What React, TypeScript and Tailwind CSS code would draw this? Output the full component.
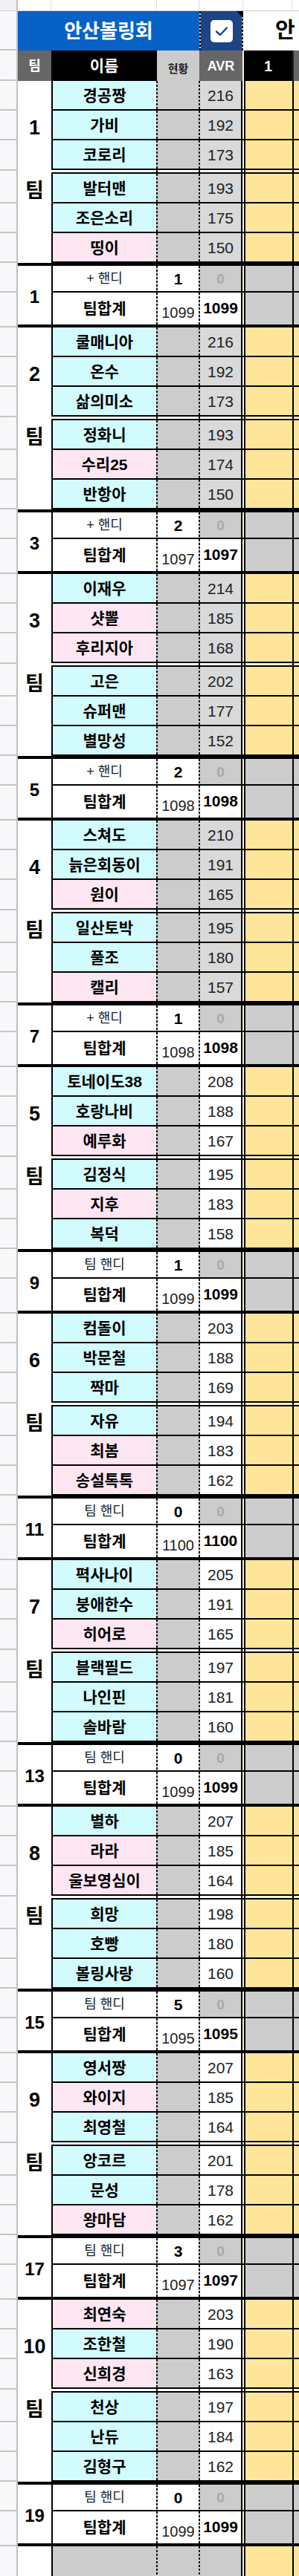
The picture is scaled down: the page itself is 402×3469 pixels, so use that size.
import React from "react";

type P = { n: string; a: number; pink?: boolean };
type Team = { players: P[]; rank: number; handi: string; hv: number; total: number; avrGray: boolean };

const teams: Team[] = [
  { players: [{ n: "경공짱", a: 216 }, { n: "가비", a: 192 }, { n: "코로리", a: 173 }, { n: "발터맨", a: 193 }, { n: "조은소리", a: 175 }, { n: "띵이", a: 150, pink: true }], rank: 1, handi: "+ 핸디", hv: 1, total: 1099, avrGray: true },
  { players: [{ n: "쿨매니아", a: 216 }, { n: "온수", a: 192 }, { n: "삶의미소", a: 173 }, { n: "정화니", a: 193 }, { n: "수리25", a: 174, pink: true }, { n: "반항아", a: 150 }], rank: 3, handi: "+ 핸디", hv: 2, total: 1097, avrGray: true },
  { players: [{ n: "이재우", a: 214 }, { n: "샷뽈", a: 185, pink: true }, { n: "후리지아", a: 168, pink: true }, { n: "고은", a: 202 }, { n: "슈퍼맨", a: 177 }, { n: "별망성", a: 152 }], rank: 5, handi: "+ 핸디", hv: 2, total: 1098, avrGray: true },
  { players: [{ n: "스쳐도", a: 210 }, { n: "늙은회동이", a: 191 }, { n: "원이", a: 165, pink: true }, { n: "일산토박", a: 195 }, { n: "풀조", a: 180 }, { n: "캘리", a: 157, pink: true }], rank: 7, handi: "+ 핸디", hv: 1, total: 1098, avrGray: true },
  { players: [{ n: "토네이도38", a: 208 }, { n: "호랑나비", a: 188 }, { n: "예루화", a: 167, pink: true }, { n: "김정식", a: 195 }, { n: "지후", a: 183, pink: true }, { n: "복덕", a: 158 }], rank: 9, handi: "팀 핸디", hv: 1, total: 1099, avrGray: false },
  { players: [{ n: "컴돌이", a: 203 }, { n: "박문철", a: 188 }, { n: "짝마", a: 169 }, { n: "자유", a: 194 }, { n: "최봄", a: 183, pink: true }, { n: "송설톡톡", a: 162, pink: true }], rank: 11, handi: "팀 핸디", hv: 0, total: 1100, avrGray: false },
  { players: [{ n: "펵사나이", a: 205 }, { n: "붕애한수", a: 191 }, { n: "히어로", a: 165, pink: true }, { n: "블랙필드", a: 197 }, { n: "나인핀", a: 181 }, { n: "솔바람", a: 160 }], rank: 13, handi: "팀 핸디", hv: 0, total: 1099, avrGray: false },
  { players: [{ n: "별하", a: 207 }, { n: "라라", a: 185, pink: true }, { n: "울보영심이", a: 164, pink: true }, { n: "희망", a: 198 }, { n: "호빵", a: 180 }, { n: "볼링사랑", a: 160 }], rank: 15, handi: "팀 핸디", hv: 5, total: 1095, avrGray: false },
  { players: [{ n: "영서짱", a: 207 }, { n: "와이지", a: 185, pink: true }, { n: "최영철", a: 164 }, { n: "앙코르", a: 201 }, { n: "문성", a: 178 }, { n: "왕마담", a: 162, pink: true }], rank: 17, handi: "팀 핸디", hv: 3, total: 1097, avrGray: false },
  { players: [{ n: "최연숙", a: 203, pink: true }, { n: "조한철", a: 190 }, { n: "신희경", a: 163, pink: true }, { n: "천상", a: 197 }, { n: "난듀", a: 184 }, { n: "김형구", a: 162 }], rank: 19, handi: "팀 핸디", hv: 0, total: 1099, avrGray: false },
];

const dashGray =
  "w-[2px] self-stretch shrink-0 bg-[repeating-linear-gradient(to_bottom,#111_0px,#111_3px,#cfcfcf_3px,#cfcfcf_5px)]";
const dashWhite =
  "w-[2px] self-stretch shrink-0 bg-[repeating-linear-gradient(to_bottom,#111_0px,#111_3px,#ffffff_3px,#ffffff_5px)]";

function Cols({
  rowCls,
  name,
  nameCls,
  hy,
  hyCls,
  avr,
  avrCls,
  scoreCls,
}: {
  rowCls: string;
  name?: React.ReactNode;
  nameCls: string;
  hy?: React.ReactNode;
  hyCls: string;
  avr?: React.ReactNode;
  avrCls: string;
  scoreCls: string;
}) {
  return (
    <div className={`flex ${rowCls}`}>
      <div className={`w-[141px] shrink-0 border-l-2 border-black flex items-center justify-center ${nameCls}`}>{name}</div>
      <div className={dashGray} />
      <div className={`w-[55px] shrink-0 flex items-center justify-center ${hyCls}`}>{hy}</div>
      <div className={dashGray} />
      <div className={`w-[55px] shrink-0 flex items-center justify-center ${avrCls}`}>{avr}</div>
      <div className="w-[2px] shrink-0 bg-black" />
      <div className="w-[2px] shrink-0 bg-[#fdf1cf]" />
      <div className="w-[2px] shrink-0 bg-black" />
      <div className={`w-[63px] shrink-0 ${scoreCls}`} />
      <div className="w-[2px] shrink-0 bg-black" />
      <div className={`flex-1 ${scoreCls}`} />
    </div>
  );
}

function GapRow() {
  return (
    <div className="flex h-[3px]">
      <div className="w-[141px] shrink-0 bg-white" />
      <div className={dashWhite} />
      <div className="w-[55px] shrink-0 bg-white" />
      <div className={dashWhite} />
      <div className="w-[55px] shrink-0 bg-white" />
      <div className="w-[2px] shrink-0 bg-black" />
      <div className="w-[2px] shrink-0 bg-[#fdf1cf]" />
      <div className="w-[2px] shrink-0 bg-black" />
      <div className="w-[63px] shrink-0 bg-[#fdf1cf]" />
      <div className="w-[2px] shrink-0 bg-black" />
      <div className="flex-1 bg-[#fdf1cf]" />
    </div>
  );
}

function GutterCell({ h }: { h: string }) {
  return <div className={`${h} border-b-2 border-[#c6c6c6]`} />;
}

function Block({ t, idx }: { t: Team; idx: number }) {
  const avrBg = t.avrGray ? "bg-[#d9d9d9]" : "bg-white";
  const playerRow = (p: P, i: number) => (
    <Cols
      key={i}
      rowCls={i === 3 ? "h-[42px] border-t-2 border-b-2 border-black" : "h-[40px] border-b-2 border-black"}
      name={<span className="text-[21px] font-bold text-black leading-none">{p.n}</span>}
      nameCls={p.pink ? "bg-[#fde6f2]" : "bg-[#d2fbfd]"}
      hyCls="bg-[#cccccc]"
      avr={<span className="text-[21px] text-[#222] leading-none">{p.a}</span>}
      avrCls={avrBg}
      scoreCls="bg-[#ffe599]"
    />
  );
  return (
    <div className="flex">
      <div className="w-[24px] shrink-0 bg-[#f8f8fb] border-r-2 border-[#c2c2c2] flex flex-col">
        <GutterCell h="h-[40px]" />
        <GutterCell h="h-[40px]" />
        <GutterCell h="h-[41px]" />
        <GutterCell h="h-[44px]" />
        <GutterCell h="h-[40px]" />
        <GutterCell h="h-[40px]" />
        <GutterCell h="h-[40px]" />
        <GutterCell h="h-[47px]" />
      </div>
      <div className="flex-1 flex flex-col">
        <div className="flex">
          <div className="w-[45px] shrink-0 bg-white flex flex-col items-center pt-[49px]">
            <div className="h-[28px] leading-[28px] text-[27px] font-bold text-black">{idx + 1}</div>
            <div className="mt-[57px] h-[28px] leading-[28px] text-[27px] font-bold text-black">팀</div>
          </div>
          <div className="flex-1 flex flex-col">
            {t.players.slice(0, 3).map((p, i) => playerRow(p, i))}
            <GapRow />
            {t.players.slice(3).map((p, i) => playerRow(p, i + 3))}
          </div>
        </div>
        <div className="h-[4px] bg-black" />
        <div className="flex">
          <div className="w-[45px] shrink-0 bg-white flex items-center justify-center pt-[4px]">
            <span className="text-[24px] font-bold text-black leading-none">{t.rank}</span>
          </div>
          <div className="flex-1 flex flex-col">
            <Cols
              rowCls="h-[36px] border-b-2 border-black"
              name={<span className="text-[18px] text-[#222] leading-none">{t.handi}</span>}
              nameCls="bg-white"
              hy={<span className="text-[21px] font-bold text-black leading-none">{t.hv}</span>}
              hyCls="bg-white"
              avr={<span className="text-[19px] font-bold text-[#a9a9a9] leading-none">0</span>}
              avrCls="bg-[#cccccc]"
              scoreCls="bg-[#cccccc]"
            />
            <Cols
              rowCls="h-[43px]"
              name={<span className="text-[21px] font-bold text-black leading-none">팀합계</span>}
              nameCls="bg-white"
              hy={<span className="text-[20px] text-[#222] leading-none pt-[10px]">{t.total}</span>}
              hyCls="bg-white"
              avr={<span className="text-[21px] font-bold text-black leading-none pb-[2px]">{t.total}</span>}
              avrCls="bg-white"
              scoreCls="bg-[#cccccc]"
            />
          </div>
        </div>
        <div className="h-[4px] bg-black" />
      </div>
    </div>
  );
}

export default function App() {
  return (
    <div className="w-[402px] h-[3469px] overflow-hidden bg-white font-['Liberation_Sans','Noto_Sans_CJK_KR',sans-serif]">
      {/* top blank row */}
      <div className="flex h-[15px] border-b border-[#cfcfcf]">
        <div className="w-[24px] shrink-0 bg-[#f1f1f4] border-r-2 border-[#c2c2c2]" />
        <div className="w-[45px] shrink-0 border-r border-[#dedede]" />
        <div className="w-[142px] shrink-0 border-r border-[#dedede]" />
        <div className="w-[57px] shrink-0 border-r border-[#dedede]" />
        <div className="w-[59px] shrink-0 border-r border-[#dedede]" />
        <div className="w-[66px] shrink-0 border-r border-[#dedede]" />
        <div className="flex-1" />
      </div>
      {/* title row */}
      <div className="flex h-[53px]">
        <div className="w-[24px] shrink-0 bg-[#f8f8fb] border-r-2 border-[#c2c2c2] border-b-2 border-b-[#c6c6c6]" />
        <div className="w-[244px] shrink-0 bg-[#0862c6] flex items-center justify-center">
          <span className="text-[26px] font-bold text-white leading-none">안산볼링회</span>
        </div>
        <div className="relative w-[59px] shrink-0 bg-[#1c4587] flex">
          <div className={dashGray} />
          <div className="flex-1 flex items-center justify-center">
            <div className="w-[30px] h-[30px] rounded-[5px] bg-white flex items-center justify-center">
              <svg width="20" height="16" viewBox="0 0 20 16">
                <path d="M3 8.5 L8 13 L17 3.5" fill="none" stroke="#1c4587" strokeWidth="2.4" strokeLinecap="round" strokeLinejoin="round" />
              </svg>
            </div>
          </div>
          <div className={dashGray} />
          <div className="absolute top-0 right-0 w-0 h-0 border-l-[9px] border-l-transparent border-t-[9px] border-t-black" />
        </div>
        <div className="flex-1 bg-white flex items-center pl-[43px] overflow-hidden">
          <span className="text-[29px] font-bold text-black leading-none whitespace-nowrap">안</span>
        </div>
      </div>
      {/* header row */}
      <div className="flex h-[41px]">
        <div className="w-[24px] shrink-0 bg-[#f8f8fb] border-r-2 border-[#c2c2c2] border-b-2 border-b-[#c6c6c6]" />
        <div className="w-[45px] shrink-0 bg-[#666666] flex items-center justify-center">
          <span className="text-[18px] font-bold text-white leading-none">팀</span>
        </div>
        <div className="w-[142px] shrink-0 bg-black flex items-center justify-center">
          <span className="text-[21px] font-bold text-white leading-none">이름</span>
        </div>
        <div className="w-[57px] shrink-0 bg-[#cccccc] flex items-center justify-center pt-[8px]">
          <span className="text-[15px] font-bold text-[#222] leading-none">현황</span>
        </div>
        <div className="w-[58px] shrink-0 bg-[#666666] flex items-center justify-center">
          <span className="text-[18px] font-bold text-white leading-none">AVR</span>
        </div>
        <div className="w-[2px] shrink-0 bg-[#fdf1cf]" />
        <div className="w-[65px] shrink-0 bg-black flex items-center justify-center">
          <span className="text-[20px] font-bold text-white leading-none">1</span>
        </div>
        <div className="w-[2px] shrink-0 bg-[#222]" />
        <div className="flex-1 bg-[#666666]" />
      </div>
      {teams.map((t, i) => (
        <Block key={i} t={t} idx={i} />
      ))}
      {/* footer row */}
      <div className="flex h-[40px]">
        <div className="w-[24px] shrink-0 bg-[#f8f8fb] border-r-2 border-[#c2c2c2]" />
        <div className="w-[45px] shrink-0 bg-white" />
        <div className="flex-1">
          <Cols rowCls="h-[40px]" nameCls="bg-[#cccccc]" hyCls="bg-[#cccccc]" avrCls="bg-[#cccccc]" scoreCls="bg-[#ffe599]" />
        </div>
      </div>
    </div>
  );
}
